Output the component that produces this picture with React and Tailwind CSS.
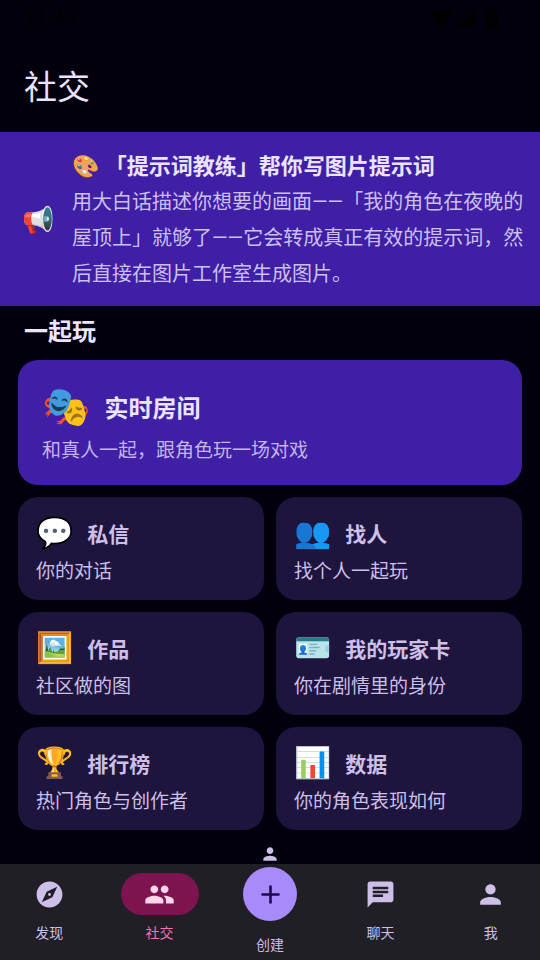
import React from "react";
import { MdAdd, MdChat, MdExplore, MdPeople, MdPerson } from "react-icons/md";

const cards = [
  { icon: "💬", title: "私信", text: "你的对话" },
  { icon: "👥", title: "找人", text: "找个人一起玩" },
  { icon: "🖼️", title: "作品", text: "社区做的图" },
  { icon: "🪪", title: "我的玩家卡", text: "你在剧情里的身份" },
  { icon: "🏆", title: "排行榜", text: "热门角色与创作者" },
  { icon: "📊", title: "数据", text: "你的角色表现如何" },
];

function StatusBar() {
  return (
    <div className="flex h-9 items-center justify-between pr-[42px] pl-6 text-black">
      <span className="text-[21px] leading-9">11:45</span>
      <div className="flex items-center gap-1">
        <svg width="22" height="18" viewBox="0 0 22 18" fill="currentColor" aria-hidden="true">
          <path d="M11 18 0 4.500Q5 0 11 0t11 4.500z" />
        </svg>
        <svg width="19" height="18" viewBox="0 0 19 18" fill="currentColor" aria-hidden="true">
          <path d="M19 0v18H0z" />
        </svg>
        <svg className="ml-1.5" width="12" height="20" viewBox="0 0 12 20" fill="currentColor" fillRule="evenodd" aria-hidden="true">
          <path d="M4 0h4v2h2q2 0 2 2v14q0 2-2 2H2q-2 0-2-2V4q0-2 2-2h2zM6.500 5 4 11h1.500v4L8 9H6.500z" />
        </svg>
      </div>
    </div>
  );
}

function Banner() {
  return (
    <section className="flex items-center bg-[#3e1fa6] pt-4 pr-3.5 pb-3.5 pl-[22px]">
      <span className="w-[50px] shrink-0 text-[26px] leading-9">📢</span>
      <div className="min-w-0 flex-1">
        <h2 className="text-[22px] leading-[38px] font-bold text-[#ebe3ff]">
          🎨 「提示词教练」帮你写图片提示词
        </h2>
        <p className="-mt-0.5 text-[20px] leading-9 text-[#cdbff0]">
          用大白话描述你想要的画面——「我的角色在夜晚的屋顶上」就够了——它会转成真正有效的提示词，然后直接在图片工作室生成图片。
        </p>
      </div>
    </section>
  );
}

function Card({ icon, title, text }) {
  return (
    <button type="button" className="rounded-[20px] bg-[#1d153e] px-[18px] pt-4 pb-3.5 text-left text-[#cdbfe8]">
      <span className="flex items-center gap-3.5">
        <span className="text-[30px] leading-10">{icon}</span>
        <span className="pt-1 text-[21px] leading-9 font-bold">{title}</span>
      </span>
      <span className="mt-[5px] block text-[19px] leading-7">{text}</span>
    </button>
  );
}

function NavItem({ Icon, label, active }) {
  return (
    <a
      href="#"
      aria-current={active ? "page" : undefined}
      className={`flex flex-1 flex-col items-center gap-2 pt-[9px] text-[14px] leading-5 ${active ? "text-[#f472b6]" : "text-[#cdbfe8]"}`}
    >
      <span className={`flex h-[42px] w-[78px] items-center justify-center rounded-full ${active ? "bg-[#7d1450] text-[#ffd6ea]" : ""}`}>
        <Icon size={31} />
      </span>
      {label}
    </a>
  );
}

export default function App() {
  return (
    <div className="flex min-h-screen flex-col bg-[#02000d] font-[Roboto,'Noto_Sans_CJK_SC','Noto_Color_Emoji',sans-serif]">
      <StatusBar />
      <header className="flex h-24 items-center px-6 pt-2">
        <h1 className="text-[33px] leading-[42px] text-[#ebe3ff]">社交</h1>
      </header>
      <Banner />
      <main className="flex-1 px-[18px] pb-[34px]">
        <h2 className="px-1.5 pt-2 pb-2.5 text-[24px] leading-9 font-bold text-[#ebe3ff]">一起玩</h2>
        <button type="button" className="block w-full rounded-[20px] bg-[#3e1fa6] px-6 pt-5 pb-5 text-left">
          <span className="flex items-center gap-3.5">
            <span className="text-[39px] leading-[54px]">🎭</span>
            <span className="pt-1 text-[24px] leading-9 font-bold text-[#ebe3ff]">实时房间</span>
          </span>
          <span className="mt-[3px] block text-[19px] leading-7 text-[#c5b5ea]">和真人一起，跟角色玩一场对戏</span>
        </button>
        <div className="mt-3 grid grid-cols-2 gap-3">
          {cards.map((card) => (
            <Card key={card.title} {...card} />
          ))}
        </div>
      </main>
      <nav className="sticky bottom-0 flex h-24 gap-3 bg-[#211f26]">
        <NavItem Icon={MdExplore} label="发现" />
        <NavItem Icon={MdPeople} label="社交" active />
        <a href="#" className="relative flex flex-1 flex-col items-center gap-3.5 pt-[3px] text-[14px] leading-5 text-[#cdbfe8]">
          <MdPerson size={20} className="absolute -top-5" />
          <span className="flex size-[54px] items-center justify-center rounded-full bg-[#a78bfa] text-[#1e0a4a]">
            <MdAdd size={31} />
          </span>
          创建
        </a>
        <NavItem Icon={MdChat} label="聊天" />
        <NavItem Icon={MdPerson} label="我" />
      </nav>
    </div>
  );
}
